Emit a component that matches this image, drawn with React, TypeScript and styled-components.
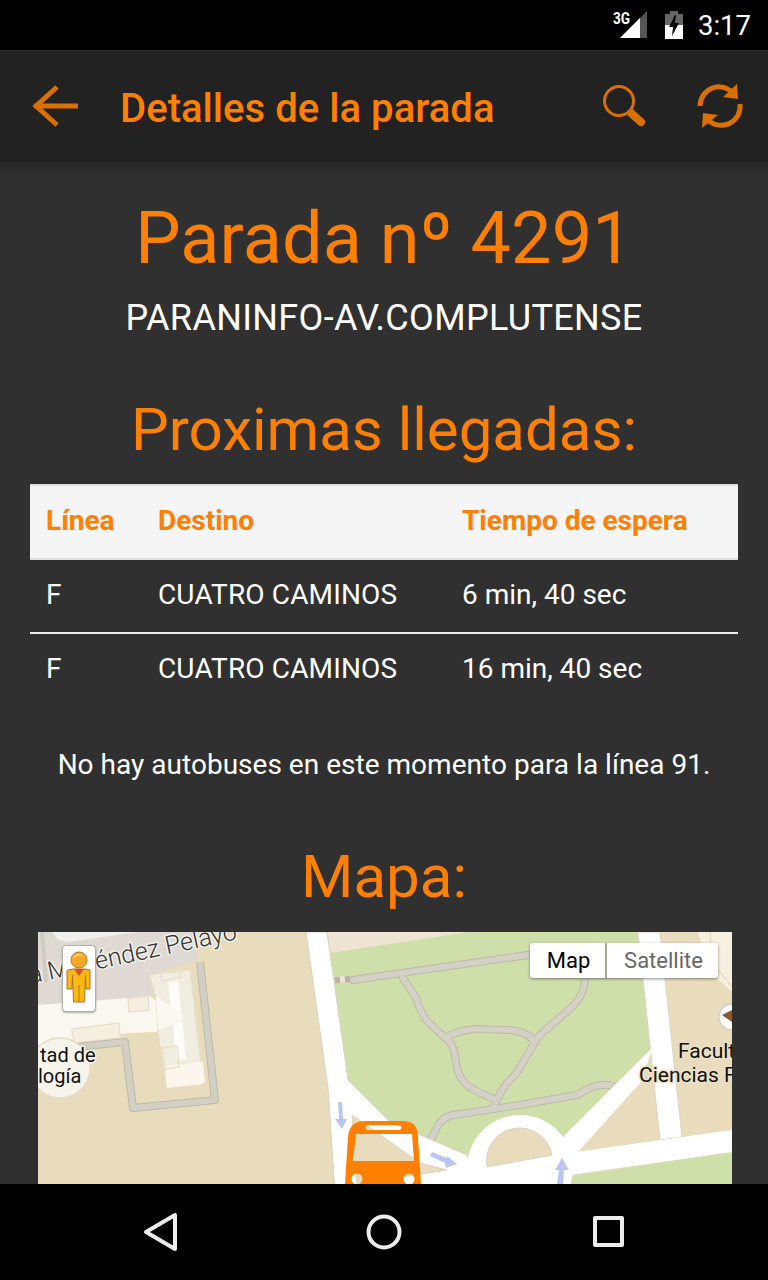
import React from "react";
import styled, { createGlobalStyle } from "styled-components";

const Global = createGlobalStyle`
  html, body { margin: 0; padding: 0; background: #000; }
  #root { width: 768px; height: 1280px; }
  * { box-sizing: border-box; }
`;

const Screen = styled.div`
  width: 768px;
  height: 1280px;
  display: flex;
  flex-direction: column;
  overflow: hidden;
  background: #303030;
  color: #fff;
  font-family: Roboto, "Liberation Sans", sans-serif;
`;

const StatusBar = styled.div`
  flex: 0 0 50px;
  background: #000;
  display: flex;
  align-items: center;
  justify-content: flex-end;
  padding-right: 17px;
`;

const Clock = styled.span`
  font-size: 27.5px;
  line-height: 50px;
  color: #fff;
  margin-left: 15px;
  position: relative;
  top: 1px;
`;

const SignalWrap = styled.div`
  width: 36px;
  height: 30px;
  margin-right: 16px;
  position: relative;
  top: -1px;
`;

const AppBar = styled.header`
  flex: 0 0 112px;
  background: #222222;
  display: flex;
  align-items: center;
  padding: 0 24px 0 32px;
`;

const AppTitle = styled.h1`
  flex: 1;
  margin: 0 0 0 40px;
  padding-top: 5px;
  font-size: 40px;
  font-weight: 500;
  color: #ff8000;
  line-height: 107px;
  white-space: nowrap;
  letter-spacing: 0.05px;
`;

const BarIcon = styled.svg<{ $gap?: number }>`
  display: block;
  flex: none;
  margin-right: ${(p) => p.$gap ?? 0}px;
`;

const Content = styled.main`
  flex: 1;
  min-height: 0;
  overflow: hidden;
  background: linear-gradient(#262626 0, #303030 14px);
`;

const StopNumber = styled.h2`
  margin: 37px 0 0;
  font-size: 72px;
  font-weight: 400;
  line-height: 80px;
  color: #ff8000;
  text-align: center;
  letter-spacing: 0.1px;
`;

const StopName = styled.p`
  margin: 19px 0 0;
  font-size: 36px;
  line-height: 40px;
  text-align: center;
  letter-spacing: 0.33px;
`;

const SectionTitle = styled.h3`
  margin: 59px 0 0;
  font-size: 60px;
  font-weight: 400;
  line-height: 66px;
  color: #ff8000;
  text-align: center;
`;

const Table = styled.div`
  width: 708px;
  margin: 21px 0 0 30px;
`;

const Row = styled.div<{ $head?: boolean; $last?: boolean }>`
  display: grid;
  grid-template-columns: 112px 304px 1fr;
  height: ${(p) => (p.$head ? 76 : 74)}px;
  align-items: center;
  font-size: 28px;
  background: ${(p) => (p.$head ? "#f5f5f5" : "transparent")};
  color: ${(p) => (p.$head ? "#ff8000" : "#fff")};
  font-weight: ${(p) => (p.$head ? 700 : 400)};
  border-top: ${(p) => (p.$head ? "2px solid #dddddd" : "none")};
  border-bottom: 2px solid ${(p) => (p.$head ? "#dddddd" : p.$last ? "transparent" : "#eeeeee")};
`;

const Cell = styled.div`
  padding: 0 0 2px 16px;
  line-height: 40px;
  white-space: nowrap;
`;

const UpperCell = styled(Cell)`
  letter-spacing: 0.15px;
`;

const Notice = styled.p`
  margin: 37px 0 0;
  font-size: 28px;
  line-height: 40px;
  text-align: center;
  letter-spacing: 0.02px;
`;

const MapFrame = styled.div`
  position: relative;
  width: 694px;
  height: 252px;
  margin: 22px 0 0 38px;
  overflow: hidden;
  background: #e8dcbc;
`;

const MapArt = styled.svg`
  display: block;
`;

const BusShape = styled.path`
  fill: #ff8000;
  filter: blur(0.7px);
`;

const PegmanButton = styled.div`
  position: absolute;
  left: 24px;
  top: 13px;
  width: 34px;
  height: 67px;
  background: #fff;
  border: 1px solid #b5b0a8;
  border-radius: 4px;
  box-shadow: 0 1px 2px rgba(0, 0, 0, 0.3);
`;

const PegmanArt = styled.svg`
  display: block;
`;

const MapTypes = styled.div`
  position: absolute;
  left: 492px;
  top: 11px;
  display: flex;
  height: 35px;
  border-radius: 3px;
  box-shadow: 0 1px 3px rgba(0, 0, 0, 0.45);
  background: #fff;
  overflow: hidden;
`;

const MapType = styled.div<{ $active?: boolean }>`
  width: ${(p) => (p.$active ? 77 : 111)}px;
  line-height: 35px;
  text-align: center;
  font-size: 22px;
  font-weight: 400;
  padding-left: 2px;
  color: ${(p) => (p.$active ? "#000" : "#666")};
  border-right: ${(p) => (p.$active ? "2px solid #a9a99a" : "none")};
`;

const NavBar = styled.nav`
  flex: 0 0 96px;
  background: #000;
  display: block;
`;

const roadPaths = [
  "M315 48 L490 23 L530 17",
  "M365 46 L378 66 Q384 84 390 90 L412 110 Q417 118 418 130 Q420 146 430 154 Q442 162 459 168 L455 176",
  "M408 105 Q425 97 440 97 L472 98 Q490 100 497 110",
  "M547 46 Q547 62 535 74 L510 96 Q500 104 497 110 L478 142 Q466 152 459 168",
  "M392 210 L400 193 Q405 185 415 183 L482 173 L539 163 L552 156 Q565 150 579 155",
];

const labelStyle = {
  fontFamily: "Roboto, sans-serif",
  paintOrder: "stroke" as const,
  strokeLinejoin: "round" as const,
};

const MapDrawing = () => (
  <MapArt width="694" height="252" viewBox="0 0 694 252">
    <rect width="694" height="252" fill="#e8dcbc" />
    {/* campus building, left */}
    <polygon points="0,0 159,0 159,28 112,43 114,66 0,76" fill="#dedad3" />
    <polygon points="14,0 100,0 30,10 20,8" fill="#f1efeb" />
    <polygon points="0,73 90,66 112,64 114,66 145,83 144,90 120,97 118,100 90,101 36,107 34,109 0,113" fill="#fbf8f1" />
    <polygon points="112,43 152,38 165,153 129,156 120,100 118,66" fill="#f0eee0" stroke="#e8e0ca" strokeWidth="1" />
    <polygon points="130,50 140,49 148,127 139,128" fill="#fdfcf8" />
    <polygon points="118,64 145,83 144,90 120,97" fill="#fbf8f1" />
    <polygon points="127,134 165,130 167,151 129,156" fill="#fbf7ec" />
    <polygon points="34,97 81,91 82,106 36,111" fill="#f5efe0" stroke="#ecdfc9" strokeWidth="1.5" />
    <polygon points="90,67 110,64 111,78 91,80" fill="#f5efe0" stroke="#ecdfc9" strokeWidth="1.5" />
    <polygon points="124,116 139,114 141,135 127,137" fill="none" stroke="#ecdfc9" strokeWidth="1.5" />
    <polygon points="123,40 142,38 143,45 124,49" fill="none" stroke="#ecdfc9" strokeWidth="1.5" />
    <polyline points="162,30 177,168 95,176 87,110 39,115" fill="none" stroke="#bdb9ad" strokeWidth="8" strokeLinejoin="round" />
    <polyline points="162,30 177,168 95,176 87,110 39,115" fill="none" stroke="#d2d0c3" strokeWidth="6" strokeLinejoin="round" />
    <polyline points="4,0 8,50" fill="none" stroke="#cfcdc2" strokeWidth="4" />
    {/* campus circle with label */}
    <circle cx="22" cy="136" r="30" fill="#f7f4ec" stroke="#e4dcc9" strokeWidth="1.5" />

    {/* grounds and green */}
    <polygon points="292,21 430,0 600,0 615,115 527,203 470,230 429,223 352,190 310,148" fill="#cfdfaa" />
    <polygon points="530,252 534,244 694,220 694,252" fill="#cfdfaa" />
    <polygon points="290,0 430,0 292,21" fill="#efe4d3" />

    {/* paths on the grounds */}
    {roadPaths.map((d) => (
      <path key={d + "o"} d={d} fill="none" stroke="#bfb9ac" strokeWidth="8" strokeLinecap="round" strokeLinejoin="round" />
    ))}
    {roadPaths.map((d) => (
      <path key={d + "i"} d={d} fill="none" stroke="#d3d1c4" strokeWidth="6" strokeLinecap="round" strokeLinejoin="round" />
    ))}
    <rect x="297" y="45" width="5" height="6" fill="#b9b3a7" transform="rotate(-8 300 48)" />
    <rect x="302" y="44" width="5" height="6" fill="#e9e6dc" transform="rotate(-8 305 47)" />
    <rect x="307" y="44" width="5" height="6" fill="#b9b3a7" transform="rotate(-8 310 47)" />

    {/* streets */}
    <polygon points="268,0 289,0 310,148 352,190 429,223 440,260 297,260 290,156" fill="#fff" stroke="#d9d3c0" strokeWidth="1" />
    <polygon points="600,0 622,0 644,205 622,208" fill="#fff" stroke="#ddd5bf" strokeWidth="1" />
    <polygon points="615,115 527,203 505,240 539,221 602,151" fill="#fff" />
    <polygon points="409,238 694,198 694,220 300,276" fill="#fff" />
    <circle cx="482" cy="236" r="53" fill="#fff" />
    <path d="M449 235 A33 33 0 0 1 514 223 Z" fill="#e8dcbc" stroke="#d9d3c0" strokeWidth="1" />
    <polygon points="314,183 382,231 409,238 319,252" fill="#e8dcbc" stroke="#d9d3c0" strokeWidth="1" />

    {/* right campus */}
    <polygon points="660,0 694,0 694,60 672,40" fill="#f6f0df" />
    <polyline points="672,0 674,30 694,55" fill="none" stroke="#e8dcc3" strokeWidth="1.5" />
    <circle cx="694" cy="85" r="13" fill="#fff" stroke="#d5cfc0" strokeWidth="1.5" />
    <polygon points="684,83 694,78 694,90" fill="#8a5a2a" />

    {/* one-way arrows */}
    <g fill="#b9c6ef">
      <polygon points="300,170 304,170 305,187 309,187 304,197 297,187 301,187" />
      <polygon points="394,220 409,226 409,224 419,232 408,236 407,231 392,224" />
      <path d="M524 226 L531 238 L526 238 L525 252 L519 252 L521 238 L517 238 Z" />
    </g>

    {/* labels */}
    <g style={labelStyle}>
      <text x="200" y="7" textAnchor="end" fontSize="25" fontWeight="300" fill="#333" stroke="#f3f1ec" strokeWidth="3" transform="rotate(-12.2 200 7)">La Menéndez Pelayo</text>
      <text x="2" y="130" fontSize="20" fill="#111" stroke="#f7f4ec" strokeWidth="3">tad de</text>
      <text x="0" y="151" fontSize="20" fill="#111" stroke="#f7f4ec" strokeWidth="3">logía</text>
      <text x="640" y="126" fontSize="21" fill="#111" stroke="#ece1c6" strokeWidth="3">Facultad</text>
      <text x="601" y="150" fontSize="21" fill="#111" stroke="#ece1c6" strokeWidth="3">Ciencias F</text>
    </g>

    {/* bus marker */}
    <BusShape
      fillRule="evenodd"
      d="M307 252 L310 205 Q311 189 327 189 L365 189 Q380 189 380 205 L383 252 Z
         M318 202 L374 202 L376 229 L315 229 Z
         M329 193 L362 193 Q365 195 362 198 L329 198 Q326 195 329 193 Z
         M313.5 247 A5.5 5.5 0 1 0 324.5 247 A5.5 5.5 0 1 0 313.5 247 Z
         M365.5 247 A5.5 5.5 0 1 0 376.5 247 A5.5 5.5 0 1 0 365.5 247 Z"
    />
  </MapArt>
);

const Pegman = () => (
  <PegmanArt width="32" height="65" viewBox="1 1 32 65">
    <path d="M5 26 L6 25 L11 24 L23 24 L28 25 L28 44 L24 44 L23.5 30 L22.5 57 L11.5 57 L10.5 30 L10 44 L5 44 Z" fill="#fdb813" stroke="#a9702a" strokeWidth="1" strokeLinejoin="round" />
    <path d="M17 40 V57" stroke="#a9702a" strokeWidth="0.8" />
    <path d="M12 24 L22 24 L17 31 Z" fill="#d9502e" />
    <circle cx="17" cy="15" r="8" fill="#f9a825" stroke="#b9792a" strokeWidth="1" />
    <path d="M11 14 A6 6 0 0 1 22 12 A7 6 0 0 0 11 14 Z" fill="#ffd98a" />
  </PegmanArt>
);

const App = () => (
  <Screen>
    <Global />
    <StatusBar>
      <SignalWrap>
        <svg width="36" height="30" viewBox="0 0 36 30" style={{ display: "block" }}>
          <polygon points="7,29 34,2 34,29" fill="#555" />
          <polygon points="7,29 27,9 27,29" fill="#fff" />
          <text transform="translate(0 15) scale(0.8 1)" fontSize="17" fontWeight="700" fill="#fff" fontFamily="Roboto, sans-serif">3G</text>
        </svg>
      </SignalWrap>
      <svg width="18" height="28" viewBox="0 0 18 28" style={{ display: "block" }}>
        <path d="M5 0 H13 V3 H18 V14 H0 V3 H5 Z" fill="#666" />
        <rect x="0" y="14" width="18" height="14" fill="#fff" />
        <polygon points="10,4 4,16 8,16 7,25 14,12 10,12 11,4" fill="#000" />
      </svg>
      <Clock>3:17</Clock>
    </StatusBar>
    <AppBar>
      <BarIcon width="48" height="48" viewBox="0 0 48 48">
        <path d="M2 24 H46 M25 5 L4 24 L25 43" fill="none" stroke="#d97000" strokeWidth="5" />
      </BarIcon>
      <AppTitle>Detalles de la parada</AppTitle>
      <BarIcon $gap={48} width="48" height="48" viewBox="0 0 48 48">
        <circle cx="19" cy="19" r="14.5" fill="none" stroke="#d97000" strokeWidth="3" />
        <path d="M31 31 L41 40" fill="none" stroke="#d97000" strokeWidth="8" strokeLinecap="round" />
      </BarIcon>
      <BarIcon width="48" height="48" viewBox="0 0 48 48">
        <g fill="none" stroke="#d97000" strokeWidth="5">
          <path d="M4 24 A19 19 0 0 1 36 10" />
          <path d="M44 22 A19 19 0 0 1 11 37" />
        </g>
        <polygon points="41,2 42,17 27,15" fill="#d97000" />
        <polygon points="6,46 7,31 22,33" fill="#d97000" />
      </BarIcon>
    </AppBar>
    <Content>
      <StopNumber>Parada nº 4291</StopNumber>
      <StopName>PARANINFO-AV.COMPLUTENSE</StopName>
      <SectionTitle>Proximas llegadas:</SectionTitle>
      <Table>
        <Row $head>
          <Cell>Línea</Cell>
          <Cell>Destino</Cell>
          <Cell>Tiempo de espera</Cell>
        </Row>
        <Row>
          <Cell>F</Cell>
          <UpperCell>CUATRO CAMINOS</UpperCell>
          <Cell>6 min, 40 sec</Cell>
        </Row>
        <Row $last>
          <Cell>F</Cell>
          <UpperCell>CUATRO CAMINOS</UpperCell>
          <Cell>16 min, 40 sec</Cell>
        </Row>
      </Table>
      <Notice>No hay autobuses en este momento para la línea 91.</Notice>
      <SectionTitle>Mapa:</SectionTitle>
      <MapFrame>
        <MapDrawing />
        <PegmanButton>
          <Pegman />
        </PegmanButton>
        <MapTypes>
          <MapType $active>Map</MapType>
          <MapType>Satellite</MapType>
        </MapTypes>
      </MapFrame>
    </Content>
    <NavBar>
      <svg width="768" height="96" viewBox="0 0 768 96" style={{ display: "block" }}>
        <g fill="none" stroke="#ececec" strokeWidth="4" strokeLinejoin="round">
          <polygon points="146,48 175,31 175,65" />
          <circle cx="384" cy="48" r="15.5" />
          <rect x="595" y="34" width="27" height="27" />
        </g>
      </svg>
    </NavBar>
  </Screen>
);

export default App;
